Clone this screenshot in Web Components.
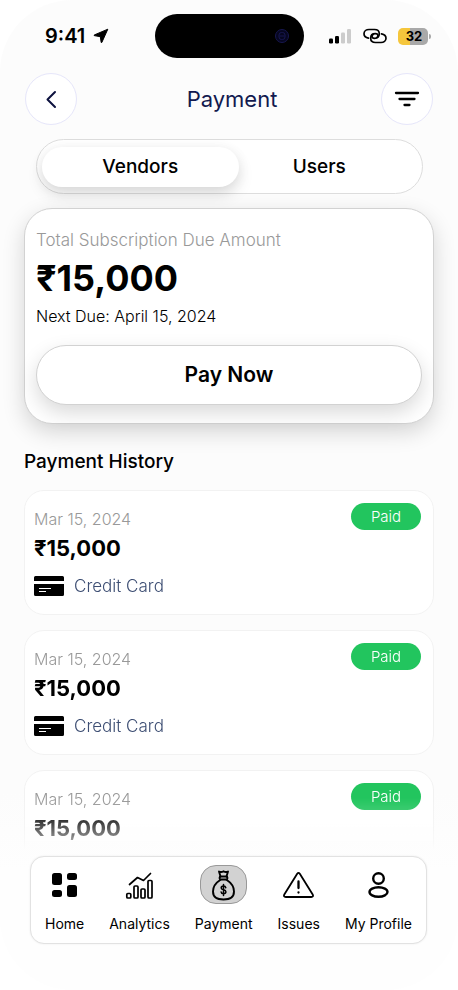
<!DOCTYPE html>
<html lang="en">
<head>
<meta charset="utf-8">
<meta name="viewport" content="width=device-width, initial-scale=1">
<title>Payment</title>
<style>
  html, body { margin: 0; height: 100%; background: #fff; }
  body { font-family: Inter, "Liberation Sans", sans-serif; color: #000; }
</style>
</head>
<body>
<payment-app>
  <status-bar slot="status">9:41</status-bar>
  <page-header slot="header">Payment</page-header>
  <segment-tabs slot="tabs">
    <segment-tab selected>Vendors</segment-tab>
    <segment-tab>Users</segment-tab>
  </segment-tabs>
  <due-card slot="due">
    <span slot="label">Total Subscription Due Amount</span>
    <span slot="amount">₹15,000</span>
    <span slot="next">Next Due: April 15, 2024</span>
    <span slot="action">Pay Now</span>
  </due-card>
  <payment-history slot="history">
    <span slot="title">Payment History</span>
    <history-item><span slot="date">Mar 15, 2024</span><span slot="amount">₹15,000</span><span slot="method">Credit Card</span><span slot="state">Paid</span></history-item>
    <history-item><span slot="date">Mar 15, 2024</span><span slot="amount">₹15,000</span><span slot="method">Credit Card</span><span slot="state">Paid</span></history-item>
    <history-item><span slot="date">Mar 15, 2024</span><span slot="amount">₹15,000</span><span slot="method">Credit Card</span><span slot="state">Paid</span></history-item>
  </payment-history>
  <bottom-nav slot="nav">
    <nav-item icon="home">Home</nav-item>
    <nav-item icon="analytics">Analytics</nav-item>
    <nav-item icon="payment" current>Payment</nav-item>
    <nav-item icon="issues">Issues</nav-item>
    <nav-item icon="profile">My Profile</nav-item>
  </bottom-nav>
</payment-app>

<script>
const define = (name, html, setup) => {
  const template = document.createElement('template');
  template.innerHTML = html;
  customElements.define(name, class extends HTMLElement {
    constructor() {
      super();
      this.attachShadow({ mode: 'open' }).append(template.content.cloneNode(true));
    }
    connectedCallback() { if (setup) setup(this, this.shadowRoot); }
  });
};

define('payment-app', `
  <style>
    :host { display: flex; flex-direction: column; box-sizing: border-box; height: 100vh; padding-bottom: 46px; background: linear-gradient(#fcfcfc 80%, #fefefe 88%); border-radius: 72px; }
    main { display: flex; flex-direction: column; flex: 1; min-height: 0; padding: 0 24px; }
    ::slotted([slot=tabs]) { margin: 14px 11px 0 12px; }
    ::slotted([slot=due]) { margin-top: 14px; }
    ::slotted([slot=history]) { flex: 1; min-height: 0; margin-top: 24px; }
    ::slotted([slot=nav]) { margin: 0 31px 0 30px; }
  </style>
  <slot name="status"></slot>
  <slot name="header"></slot>
  <main><slot name="tabs"></slot><slot name="due"></slot><slot name="history"></slot></main>
  <slot name="nav"></slot>`);

define('status-bar', `
  <style>
    :host { display: grid; grid-template-columns: 1fr 149px 1fr; align-items: center; padding: 14px 0 15px; font-size: 20px; font-weight: 600; line-height: 24px; }
    .time { display: flex; align-items: center; gap: 8px; padding-left: 45px; }
    .island { display: flex; align-items: center; justify-content: flex-end; box-sizing: border-box; height: 44px; padding-right: 14px; border-radius: 22px; background: #000; }
    .signals { display: flex; align-items: center; justify-content: flex-end; gap: 11px; padding-right: 27px; }
    .battery { display: flex; align-items: center; gap: 1px; }
    .level { width: 30px; border-radius: 5px; background: linear-gradient(90deg, #f5c63c 12px, #a9a9a9 12px); font-size: 13px; font-weight: 700; line-height: 17px; text-align: center; text-indent: 2px; }
    .tip { width: 2px; height: 5px; border-radius: 0 2px 2px 0; background: #a9a9a9; }
    svg { display: block; }
  </style>
  <div class="time"><slot></slot><svg width="16" height="16" viewBox="0 0 16 16"><path stroke="#000" stroke-linejoin="round" d="M14.800 1.200 8.800 14.500 8.200 14.500 7.300 8.700 1.200 7.600 1.200 7Z"/></svg></div>
  <div class="island"><svg width="16" height="16" viewBox="0 0 16 16" fill="none" stroke="#17174f"><circle cx="8" cy="8" r="6.500" fill="#060620"/><rect x="5" y="4.500" width="6" height="7" rx="2.500"/><path d="M5.500 8h5"/></svg></div>
  <div class="signals">
    <svg width="24" height="16" viewBox="0 0 24 16"><rect x="1" y="10.500" width="4" height="5" rx="1.200"/><rect x="7" y="8" width="4" height="7.500" rx="1.200"/><rect x="13" y="4.500" width="4" height="11" rx="1.200" fill="#ccc"/><rect x="19" y="1" width="4" height="14.500" rx="1.200" fill="#ccc"/></svg>
    <svg width="24" height="16" viewBox="0 0 24 16" fill="none" stroke="#000" stroke-width="1.700" stroke-linecap="round"><path d="M5.500 10.200C2.700 9.700 1 8 1 5.800 1 3.300 3.300 1.500 6 1.500h5.500c3 0 4.800 1.800 4.800 4.300 0 2.700-1.800 4.500-4.700 4.500-1.700 0-2.600-1-2.600-2.100 0-.8.400-1.400 1.100-1.800"/><path d="M18.500 5.800c2.800.5 4.500 2.200 4.500 4.400 0 2.500-2.300 4.300-5 4.300h-5.500c-3 0-4.800-1.800-4.800-4.300 0-2.700 1.800-4.500 4.700-4.500 1.700 0 2.600 1 2.600 2.100 0 .8-.4 1.400-1.100 1.800"/></svg>
    <div class="battery"><div class="level">32</div><div class="tip"></div></div>
  </div>`);

define('page-header', `
  <style>
    :host { display: flex; align-items: center; justify-content: space-between; padding: 0 25px; }
    h1 { margin: 0; padding-left: 6px; font-size: 22px; font-weight: 400; line-height: 28px; color: #121a4f; }
    button { display: grid; place-items: center; width: 52px; height: 52px; padding: 0; border: 1px solid #e6e6fa; border-radius: 50%; background: #fff; }
    svg { fill: none; stroke: #000; stroke-linecap: round; stroke-linejoin: round; stroke-width: 2; }
  </style>
  <button aria-label="Back"><svg width="26" height="26" viewBox="0 0 26 26" style="stroke:#0d123f"><path d="m17 6-7.500 7.500 7.500 7.500"/></svg></button>
  <h1><slot></slot></h1>
  <button aria-label="Filter"><svg width="26" height="26" viewBox="0 0 26 26"><path stroke-width="2.300" d="M2 7h22M5.500 13h15M10.500 19h5"/></svg></button>`);

define('segment-tabs', `
  <style>
    :host { display: grid; grid-template-columns: 196fr 183fr; padding: 7px 0 6px 5px; border: 1px solid #ddd; border-radius: 28px; background: #fff; }
    div { display: contents; }
  </style>
  <div role="tablist"><slot></slot></div>`);

define('segment-tab', `
  <style>
    :host { display: grid; }
    button { height: 40px; padding: 0; border: 0; border-radius: 20px; background: transparent; font: 500 19px/24px Inter, "Liberation Sans", sans-serif; color: #000; }
    :host([selected]) button { background: #fff; box-shadow: 0 8px 16px rgba(0,0,0,.12), 0 2px 14px rgba(0,0,0,.06); }
    :host(:not([selected])) button { padding-right: 22px; }
  </style>
  <button role="tab"><slot></slot></button>`, (host, root) => {
  root.querySelector('button').setAttribute('aria-selected', host.hasAttribute('selected'));
});

define('due-card', `
  <style>
    :host { display: flex; flex-direction: column; padding: 18px 11px 18px; border: 1px solid #d2d2d2; border-radius: 28px; background: #fff; box-shadow: 0 8px 22px rgba(0,0,0,.16); position: relative; }
    .label { font-size: 17px; font-weight: 300; line-height: 26px; color: #999; }
    .amount { font-size: 36px; font-weight: 700; line-height: 50px; }
    .next { font-size: 16px; font-weight: 300; line-height: 26px; }
    button { height: 60px; margin-top: 16px; border: 1px solid #d2d2d2; border-radius: 30px; background: #fff; box-shadow: 0 8px 20px rgba(0,0,0,.15); font: 600 21px/28px Inter, "Liberation Sans", sans-serif; color: #000; }
  </style>
  <div class="label"><slot name="label"></slot></div>
  <div class="amount"><slot name="amount"></slot></div>
  <div class="next"><slot name="next"></slot></div>
  <button><slot name="action"></slot></button>`);

define('payment-history', `
  <style>
    :host { display: flex; flex-direction: column; gap: 14px; }
    h2 { margin: 0; font-size: 19px; font-weight: 500; line-height: 28px; }
    .list { --fade: linear-gradient(#000 calc(100% - 58px), rgba(0,0,0,.8) calc(100% - 36px), rgba(0,0,0,.45) calc(100% - 18px), transparent calc(100% - 6px)); display: flex; flex-direction: column; gap: 15px; flex: 1; min-height: 0; overflow-y: auto; scrollbar-width: none; -webkit-mask-image: var(--fade); mask-image: var(--fade); }
  </style>
  <h2><slot name="title"></slot></h2>
  <div class="list"><slot></slot></div>`);

define('history-item', `
  <style>
    :host { display: grid; grid-template-columns: 1fr auto; flex: none; padding: 12px 12px 13px 9px; border: 1px solid #f2f2f2; border-radius: 20px; background: #fff; }
    .date { padding-top: 3px; font-size: 16px; font-weight: 300; line-height: 26px; color: #999; }
    .state { width: 70px; height: 27px; border-radius: 14px; background: #22c55e; font-size: 15px; font-weight: 300; line-height: 28px; text-align: center; color: #fff; }
    .amount, .method { grid-column: 1 / -1; }
    .amount { font-size: 22px; font-weight: 700; line-height: 32px; }
    .method { display: flex; align-items: center; gap: 10px; padding-top: 7px; font-size: 17px; font-weight: 300; line-height: 30px; color: #3d4e73; }
  </style>
  <div class="date"><slot name="date"></slot></div>
  <div class="state"><slot name="state"></slot></div>
  <div class="amount"><slot name="amount"></slot></div>
  <div class="method">
    <svg width="30" height="20" viewBox="0 0 30 20"><path d="M1.500 0h27Q30 0 30 1.500V5H0V1.500Q0 0 1.500 0ZM0 8h30v10.500q0 1.500-1.500 1.500h-27Q0 20 0 18.500Z"/><path d="M5 12.500h12M5 15.500h7" stroke="#fff" stroke-width="1.200"/></svg>
    <slot name="method"></slot>
  </div>`);

define('bottom-nav', `
  <style>
    :host { display: block; border: 1px solid #e2e2e2; border-radius: 14px; background: #fff; box-shadow: 0 0 2px rgba(0,0,0,.08); }
    nav { display: flex; justify-content: space-between; padding: 8px 14px 7px 14px; }
  </style>
  <nav aria-label="Main"><slot></slot></nav>`);

const icons = {
  home: '<g stroke="none" fill="#000"><rect x="7" y="7" width="10" height="12" rx="2.500"/><rect x="22" y="7" width="10" height="7" rx="2.500"/><rect x="7" y="24" width="10" height="7" rx="2.500"/><rect x="22" y="19" width="10" height="12" rx="2.500"/></g>',
  analytics: '<g stroke-width="1.700"><path d="m9.500 18.500 8-7 6 3 7-7"/><rect x="6.800" y="27.500" width="4" height="4.500" rx="1"/><rect x="14" y="20" width="4" height="12" rx="1"/><rect x="21" y="23" width="4" height="9" rx="1"/><rect x="28" y="14.500" width="4" height="17.500" rx="1"/></g>',
  payment: '<g stroke-width="1.900"><path d="M16.500 10.500 15 5.500Q17.200 6.500 19.500 5.300 21.800 6.500 24 5.500L22.500 10.500"/><rect x="15.500" y="10.500" width="8" height="3" rx="1.500"/><path d="M16.500 13.800C10.800 17.500 9 21.500 9 25.500c0 5.500 4 8 10.500 8s10.500-2.500 10.500-8c0-4-1.800-8-7.500-11.700"/><path stroke-width="1.500" d="M21.800 21.800c-.3-1.200-1.100-1.700-2.300-1.700-1.400 0-2.300.7-2.300 1.800 0 2.500 4.700 1.300 4.700 3.900 0 1.300-1 2-2.400 2-1.300 0-2.200-.6-2.400-1.900M19.500 18.500v11"/></g>',
  issues: '<g stroke-width="1.800"><path d="M18.200 7.700q1.300-1.800 2.600 0L33.700 28.500q1.200 2.500-1.500 2.500H6.800q-2.700 0-1.500-2.500Z"/><path stroke-width="2.300" d="M19.500 15.500v6.500M19.500 26.500v.1"/></g>',
  profile: '<g stroke-width="2.400"><circle cx="19.500" cy="12.500" r="5.300"/><ellipse cx="19.500" cy="26" rx="9" ry="4.800"/></g>'
};

define('nav-item', `
  <style>
    :host { display: block; }
    a { display: flex; flex-direction: column; align-items: center; gap: 8px; font-size: 14px; font-weight: 400; line-height: 24px; color: #000; text-decoration: none; white-space: nowrap; }
    .icon { display: grid; place-items: center; box-sizing: border-box; width: 47px; height: 39px; margin: 0 -8px; border: 1px solid transparent; border-radius: 16px; }
    :host([current]) .icon { border-color: #999; background: #d2d2d2; }
  </style>
  <a href="#"><span class="icon"></span><span><slot></slot></span></a>`, (host, root) => {
  root.querySelector('.icon').innerHTML = '<svg width="39" height="37" viewBox="0 0 39 37" fill="none" stroke="#000" stroke-linecap="round" stroke-linejoin="round" aria-hidden="true">' + icons[host.getAttribute('icon')] + '</svg>';
  if (host.hasAttribute('current')) root.querySelector('a').setAttribute('aria-current', 'page');
});
</script>
</body>
</html>
